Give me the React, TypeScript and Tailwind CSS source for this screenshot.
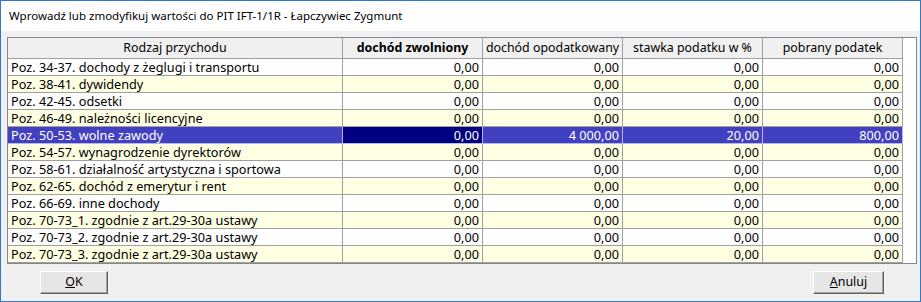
import React from 'react';

type Row = { label: string; values: string[] };

const rows: Row[] = [
  { label: 'Poz. 34-37. dochody z żeglugi i transportu', values: ['0,00', '0,00', '0,00', '0,00'] },
  { label: 'Poz. 38-41. dywidendy', values: ['0,00', '0,00', '0,00', '0,00'] },
  { label: 'Poz. 42-45. odsetki', values: ['0,00', '0,00', '0,00', '0,00'] },
  { label: 'Poz. 46-49. należności licencyjne', values: ['0,00', '0,00', '0,00', '0,00'] },
  { label: 'Poz. 50-53. wolne zawody', values: ['0,00', '4 000,00', '20,00', '800,00'] },
  { label: 'Poz. 54-57. wynagrodzenie dyrektorów', values: ['0,00', '0,00', '0,00', '0,00'] },
  { label: 'Poz. 58-61. działalność artystyczna i sportowa', values: ['0,00', '0,00', '0,00', '0,00'] },
  { label: 'Poz. 62-65. dochód z emerytur i rent', values: ['0,00', '0,00', '0,00', '0,00'] },
  { label: 'Poz. 66-69. inne dochody', values: ['0,00', '0,00', '0,00', '0,00'] },
  { label: 'Poz. 70-73_1. zgodnie z art.29-30a ustawy', values: ['0,00', '0,00', '0,00', '0,00'] },
  { label: 'Poz. 70-73_2. zgodnie z art.29-30a ustawy', values: ['0,00', '0,00', '0,00', '0,00'] },
  { label: 'Poz. 70-73_3. zgodnie z art.29-30a ustawy', values: ['0,00', '0,00', '0,00', '0,00'] },
];

const headers = ['Rodzaj przychodu', 'dochód zwolniony', 'dochód opodatkowany', 'stawka podatku w %', 'pobrany podatek'];
const SELECTED = 4;

export default function App() {
  return (
    <div
      className="flex h-[302px] w-[921px] flex-col border border-[#2b79d0] bg-[#f0f0f0] text-black"
      style={{ fontFamily: '"Noto Sans", "Open Sans", sans-serif' }}
    >
      <div className="flex h-[30px] shrink-0 items-center bg-white pl-[8px] pb-[1px] text-[11.5px]">
        Wprowadź lub zmodyfikuj wartości do PIT IFT-1/1R - Łapczywiec Zygmunt
      </div>

      <div className="ml-[6px] mr-[3px] mt-[6px] h-[227px] border border-[#828790] bg-white">
        <div className="grid grid-cols-[335px_140px_140px_140px_140px]">
          {headers.map((h, i) => (
            <div
              key={h}
              className={`flex h-[21px] items-center justify-center border-b border-r border-[#a0a0a0] bg-[#f0f0f0] text-[12.4px] ${i === 1 ? 'font-bold' : ''}`}
            >
              {h}
            </div>
          ))}
          {rows.map((row, r) => {
            const selected = r === SELECTED;
            const bg = selected ? 'bg-[#4040c0] text-white' : r % 2 === 1 ? 'bg-[#ffffe3]' : 'bg-white';
            const line = selected ? 'border-[#b8b8e8]' : 'border-[#a0a0a0]';
            return (
              <React.Fragment key={row.label}>
                <div className={`flex h-[17px] items-center whitespace-nowrap border-b border-r pl-[3px] pt-[1px] text-[12.7px] ${line} ${bg}`}>
                  {row.label}
                </div>
                {row.values.map((v, c) => (
                  <div
                    key={c}
                    className={`flex h-[17px] items-center justify-end border-b border-r pr-[3px] pt-[1px] text-[12.7px] ${line} ${
                      selected && c === 0 ? 'bg-[#000080] text-white' : bg
                    }`}
                  >
                    {v}
                  </div>
                ))}
              </React.Fragment>
            );
          })}
        </div>
      </div>

      <div className="flex flex-1 items-start justify-between pl-[39px] pr-[36px] pt-[7px] text-[12.4px]">
        <WinButton underline="O" rest="K" width="w-[68px]" />
        <WinButton underline="A" rest="nuluj" width="w-[71px]" />
      </div>
    </div>
  );
}

function WinButton({ underline, rest, width }: { underline: string; rest: string; width: string }) {
  return (
    <button
      type="button"
      className={`flex h-[23px] ${width} items-center justify-center border border-b-[#646464] border-l-[#fdfdfd] border-r-[#646464] border-t-[#fdfdfd] bg-[#e6e6e6] shadow-[inset_-1px_-1px_0_#a0a0a0]`}
    >
      <span>
        <span className="underline">{underline}</span>
        {rest}
      </span>
    </button>
  );
}
